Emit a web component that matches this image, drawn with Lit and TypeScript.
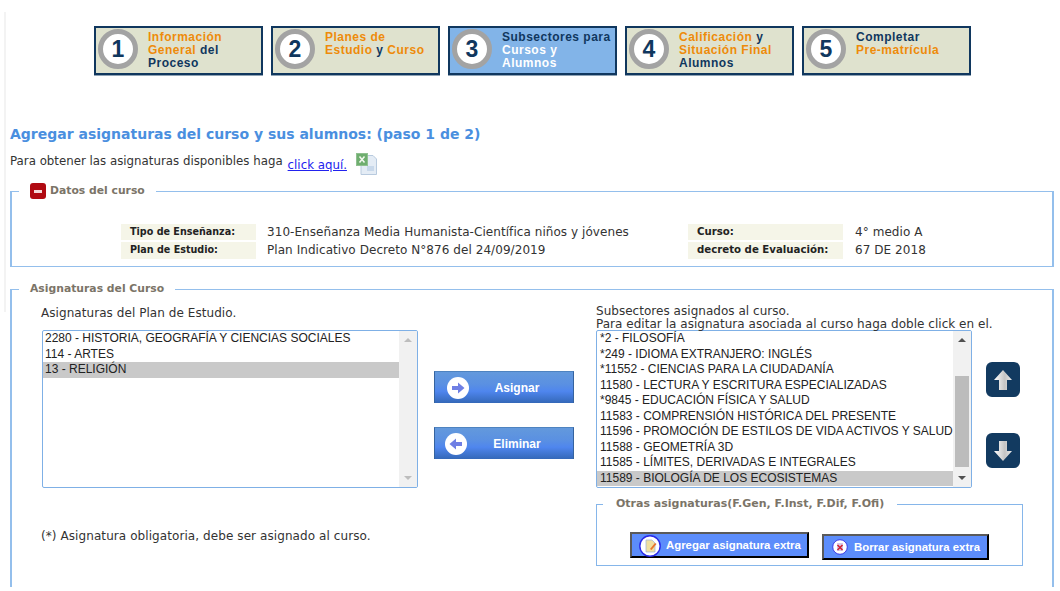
import { LitElement, html, css, svg } from "lit";
import { customElement } from "lit/decorators.js";

const steps = [
  { n: 1, lines: [[["Información", 1]], [["General", 1], [" del", 0]], [["Proceso", 0]]] },
  { n: 2, lines: [[["Planes de", 1]], [["Estudio", 1], [" y ", 0], ["Curso", 1]]] },
  { n: 3, active: true, lines: [[["Subsectores para", 0]], [["Cursos y", 2]], [["Alumnos", 2]]] },
  { n: 4, lines: [[["Calificación", 1], [" y", 0]], [["Situación Final", 1]], [["Alumnos", 0]]] },
  { n: 5, lines: [[["Completar", 0]], [["Pre-matrícula", 1]]] },
] as any[];

const leftItems = ["2280 - HISTORIA, GEOGRAFÍA Y CIENCIAS SOCIALES", "114 - ARTES", "13 - RELIGIÓN"];
const rightItems = [
  "*2 - FILOSOFÍA",
  "*249 - IDIOMA EXTRANJERO: INGLÉS",
  "*11552 - CIENCIAS PARA LA CIUDADANÍA",
  "11580 - LECTURA Y ESCRITURA ESPECIALIZADAS",
  "*9845 - EDUCACIÓN FÍSICA Y SALUD",
  "11583 - COMPRENSIÓN HISTÓRICA DEL PRESENTE",
  "11596 - PROMOCIÓN DE ESTILOS DE VIDA ACTIVOS Y SALUD",
  "11588 - GEOMETRÍA 3D",
  "11585 - LÍMITES, DERIVADAS E INTEGRALES",
  "11589 - BIOLOGÍA DE LOS ECOSISTEMAS",
];

const circleArrow = (dir: "r" | "l") => html`<svg class="ci" viewBox="0 0 22 22" width="22" height="22">
  <circle cx="11" cy="11" r="11" fill="#fff"></circle>
  ${dir === "r"
    ? svg`<path d="M5 9h6V5.5L17.5 11 11 16.5V13H5z" fill="#6f7fe4"></path>`
    : svg`<path d="M17 9h-6V5.5L4.5 11 11 16.5V13h6z" fill="#6f7fe4"></path>`}
</svg>`;

const bigArrow = (up: boolean) => html`<svg viewBox="0 0 20 22" width="20" height="22">
  <defs><linearGradient id=${up ? "au" : "ad"} x1="0" y1="0" x2="1" y2="0">
    <stop offset="0" stop-color="#ffffff"></stop><stop offset="0.6" stop-color="#c4c4c4"></stop><stop offset="1" stop-color="#ececec"></stop>
  </linearGradient></defs>
  <path d=${up ? "M10 1 19 11h-5v10H6V11H1z" : "M6 1h8v10h5L10 21 1 11h5z"} fill="url(#${up ? "au" : "ad"})"></path>
</svg>`;

@customElement("app-root")
export class AppRoot extends LitElement {
  static styles = css`
    :host { display: block; width: 1060px; height: 591px; overflow: hidden; background: #fff linear-gradient(#f3f3f3, #f3f3f3) 4px 12px / 2px 300px no-repeat; font-family: "DejaVu Sans", Verdana, sans-serif; font-size: 12px; color: #333; }
    .page { padding: 26px 6px 0 10px; box-sizing: border-box; height: 587px; overflow: hidden; }
    .steps { display: flex; margin-left: 84px; gap: 8px; height: 49px; }
    .step { width: 169px; box-sizing: border-box; border: 2px solid #10375e; box-shadow: 0 1px 0 #8fa3b5; background: #dfe2ce; display: flex; padding: 1px 0 0 2px; font: bold 12px/13px "Liberation Sans", Arial, sans-serif; letter-spacing: .5px; color: #10375e; }
    .step.active { background: #82b4e8; }
    .num { width: 40px; height: 40px; flex: none; box-sizing: border-box; border: 5px solid #a3a3a3; border-radius: 50%; background: #fff; font: bold 23px/30px "Liberation Sans", Arial, sans-serif; letter-spacing: 0; text-align: center; }
    .stext { margin-left: 10px; padding-top: 2px; white-space: pre; }
    .c1 { color: #ee8b0a; }
    .c2 { color: #fff; }
    h1 { margin: 50px 0 0; font: bold 14px/18px "DejaVu Sans", Verdana, sans-serif; color: #4a8fdf; }
    .intro { display: flex; align-items: flex-start; margin-top: 10px; height: 26px; line-height: 14px; font-size: 11.8px; }
    .intro span { margin-top: 1px; }
    .intro a { color: #2222ee; text-decoration: underline; margin: 5px 0 0 5px; }
    .intro svg { margin: 0 0 0 9px; }
    fieldset { border: solid #94bfec; border-width: 1px 2px; margin: 0; padding: 0; min-width: 0; }
    legend { font: bold 10.8px/14px "DejaVu Sans", Verdana, sans-serif; color: #7b7468; padding: 0 11px; margin-left: 7px; display: flex; align-items: center; gap: 4px; }
    .fs1 { margin: 4px 0 0; height: 84px; box-sizing: border-box; }
    .minus { width: 16px; height: 16px; border-radius: 3px; background: #b00a12; display: flex; align-items: center; justify-content: center; }
    .minus i { display: block; width: 8px; height: 3px; background: #f4d8d8; }
    .info { display: grid; grid-template-columns: 135px 432px 155px 1fr; grid-template-rows: 16px 17px; row-gap: 2px; margin: 25px 0 0 109px; line-height: 16px; }
    .info b { background: #f5f5e8; font: bold 9.6px/16px "DejaVu Sans", Verdana, sans-serif; color: #222; padding-left: 9px; }
    .info span { padding-left: 11px; letter-spacing: .06px; }
    .info b.r { font-size: 10.2px; }
    .info span.r { padding-left: 12px; }
    .fs2 { margin: 15px 0 0; height: 340px; box-sizing: border-box; }
    .grid { display: grid; grid-template-columns: 377px 177px 377px 1fr; margin: 8px 0 0 30px; }
    .cap { height: 25px; line-height: 13px; margin-top: 1px; box-sizing: border-box; white-space: nowrap; letter-spacing: .03px; }
    .capl { line-height: 14px; padding-top: 1px; margin-left: -1px; letter-spacing: .06px; }
    .lb { width: 376px; height: 158px; box-sizing: border-box; border: 1px solid #7fb0e6; border-radius: 2px; display: flex; overflow: hidden; font: 12px/15.5px "Liberation Sans", Arial, sans-serif; color: #222; }
    .items { flex: 1; min-width: 0; display: flex; flex-direction: column; overflow: hidden; }
    .items.end { justify-content: flex-end; padding-bottom: 1px; }
    .it { padding-left: 2px; white-space: nowrap; flex: none; height: 15.5px; }
    .items.end .it { padding-left: 3px; }
    .it.sel { background: #c9c9c9; }
    .sb { width: 18px; flex: none; background: #f1f1f1; position: relative; }
    .sb .t, .sb .b { position: absolute; left: 5px; width: 0; height: 0; border-left: 4px solid transparent; border-right: 4px solid transparent; }
    .sb .t { top: 7px; border-bottom: 4px solid #bdbdbd; }
    .sb .b { bottom: 7px; border-top: 4px solid #bdbdbd; }
    .sb.dark .t { border-bottom-color: #505050; }
    .sb.dark .b { border-top-color: #505050; }
    .sb .thumb { position: absolute; left: 2px; right: 2px; top: 45px; height: 91px; background: #bcbcbc; }
    .mid { display: flex; flex-direction: column; gap: 24px; padding: 67px 0 0 15px; }
    .mv { width: 140px; height: 32px; box-sizing: border-box; border: 0; border-top: 1px solid #4e83c0; border-left: 1px solid #35639f; border-right: 1px solid #35639f; background: linear-gradient(#6399dc 0%, #5a90e2 40%, #4f86ee 62%, #3468b8 100%); display: grid; grid-template-columns: 34px 1fr; align-items: center; color: #fff; font: bold 12px "Liberation Sans", Arial, sans-serif; text-align: center; padding: 0 0 0 12px; }
    .mv.l { padding-left: 10px; }
    .mv .ci { display: block; }
    .mv span { padding-right: 20px; }
    .mv.l span { padding-right: 18px; }
    .upd { display: flex; flex-direction: column; gap: 36px; padding: 58px 0 0 13px; }
    .sq { width: 34px; height: 35px; border-radius: 6px; background: #123a60; display: flex; align-items: center; justify-content: center; }
    .note { grid-column: 1 / 3; margin-top: 41px; line-height: 14px; letter-spacing: .08px; margin-left: -1px; }
    .fs3 { grid-column: 3 / 5; margin-top: 9px; width: 427px; height: 69px; box-sizing: border-box; border-width: 1px; border-color: #86b6ea; }
    .fs3 legend { margin-left: 6px; padding: 0 13px; font-size: 11px; }
    .ex { display: flex; align-items: flex-start; gap: 13px; margin: 21px 0 0 33px; }
    .xb { box-sizing: border-box; height: 26px; display: flex; align-items: center; background: #5c8dfb; border: 2px solid; border-color: #5a5a5a #000 #000 #5a5a5a; color: #fff; font: bold 11.4px "Liberation Sans", Arial, sans-serif; }
    .xb.a { width: 179px; padding-left: 7px; gap: 5px; }
    .xb.a svg { margin-top: 2px; }
    .xb.b { width: 167px; padding-left: 8px; margin-top: 2px; gap: 6px; }
  `;

  render() {
    return html`<div class="page">
      <div class="steps">
        ${steps.map((s) => html`<div class="step ${s.active ? "active" : ""}">
          <div class="num">${s.n}</div>
          <div class="stext">${s.lines.map((l: any[]) => html`<div>${l.map(([t, c]) => html`<span class="c${c}">${t}</span>`)}</div>`)}</div>
        </div>`)}
      </div>
      <h1>Agregar asignaturas del curso y sus alumnos: (paso 1 de 2)</h1>
      <div class="intro">
        <span>Para obtener las asignaturas disponibles haga</span><a href="#">click aquí.</a>
        <svg viewBox="0 0 22 22" width="22" height="22">
          <path d="M5 2.5h12l3.5 3.5v15.500H5z" fill="#e4ecf5" stroke="#b8cade"></path>
          <path d="M11 13h7v5h-7z" fill="#c8d8ea"></path>
          <rect x="0.500" y="0.500" width="11" height="12" fill="#6fae6f" stroke="#8fc08f"></rect>
          <path d="M3.500 3.500 8.500 9.500M8.500 3.500 3.500 9.500" stroke="#f4f8f0" stroke-width="1.500"></path>
        </svg>
      </div>
      <fieldset class="fs1">
        <legend><span class="minus"><i></i></span>Datos del curso</legend>
        <div class="info">
          <b>Tipo de Enseñanza:</b><span>310-Enseñanza Media Humanista-Científica niños y jóvenes</span>
          <b class="r">Curso:</b><span class="r">4° medio A</span>
          <b>Plan de Estudio:</b><span>Plan Indicativo Decreto N°876 del 24/09/2019</span>
          <b class="r">decreto de Evaluación:</b><span class="r">67 DE 2018</span>
        </div>
      </fieldset>
      <fieldset class="fs2">
        <legend>Asignaturas del Curso</legend>
        <div class="grid">
          <div>
            <div class="cap capl">Asignaturas del Plan de Estudio.</div>
            <div class="lb">
              <div class="items">${leftItems.map((t, i) => html`<div class="it ${i === 2 ? "sel" : ""}">${t}</div>`)}</div>
              <div class="sb"><i class="t"></i><i class="b"></i></div>
            </div>
          </div>
          <div class="mid">
            <div class="mv">${circleArrow("r")}<span>Asignar</span></div>
            <div class="mv l">${circleArrow("l")}<span>Eliminar</span></div>
          </div>
          <div>
            <div class="cap">Subsectores asignados al curso.<br />Para editar la asignatura asociada al curso haga doble click en el.</div>
            <div class="lb">
              <div class="items end">${rightItems.map((t, i) => html`<div class="it ${i === 9 ? "sel" : ""}">${t}</div>`)}</div>
              <div class="sb dark"><i class="t"></i><div class="thumb"></div><i class="b"></i></div>
            </div>
          </div>
          <div class="upd">
            <div class="sq">${bigArrow(true)}</div>
            <div class="sq">${bigArrow(false)}</div>
          </div>
          <div class="note">(*) Asignatura obligatoria, debe ser asignado al curso.</div>
          <fieldset class="fs3">
            <legend>Otras asignaturas(F.Gen, F.Inst, F.Dif, F.Ofi)</legend>
            <div class="ex">
              <div class="xb a">
                <svg viewBox="0 0 22 22" width="22" height="22"><circle cx="11" cy="11" r="10.2" fill="#fff" stroke="#2a2ae8" stroke-width="1.4"></circle><path d="M7 5h6l3 3v9H7z" fill="#f0e0a0" stroke="#9ab0d8" stroke-width=".7"></path><path d="M11 14l5-6 1.500 1-5 6z" fill="#e8742a"></path></svg>
                <span>Agregar asignatura extra</span>
              </div>
              <div class="xb b">
                <svg viewBox="0 0 16 16" width="16" height="16"><circle cx="8" cy="8" r="7.300" fill="#fff" stroke="#3a3ae8"></circle><rect x="5" y="4" width="6" height="8" fill="#d8c8e8"></rect><path d="M5.500 6l5 5M10.500 6l-5 5" stroke="#d02030" stroke-width="1.600"></path></svg>
                <span>Borrar asignatura extra</span>
              </div>
            </div>
          </fieldset>
        </div>
      </fieldset>
    </div>`;
  }
}
